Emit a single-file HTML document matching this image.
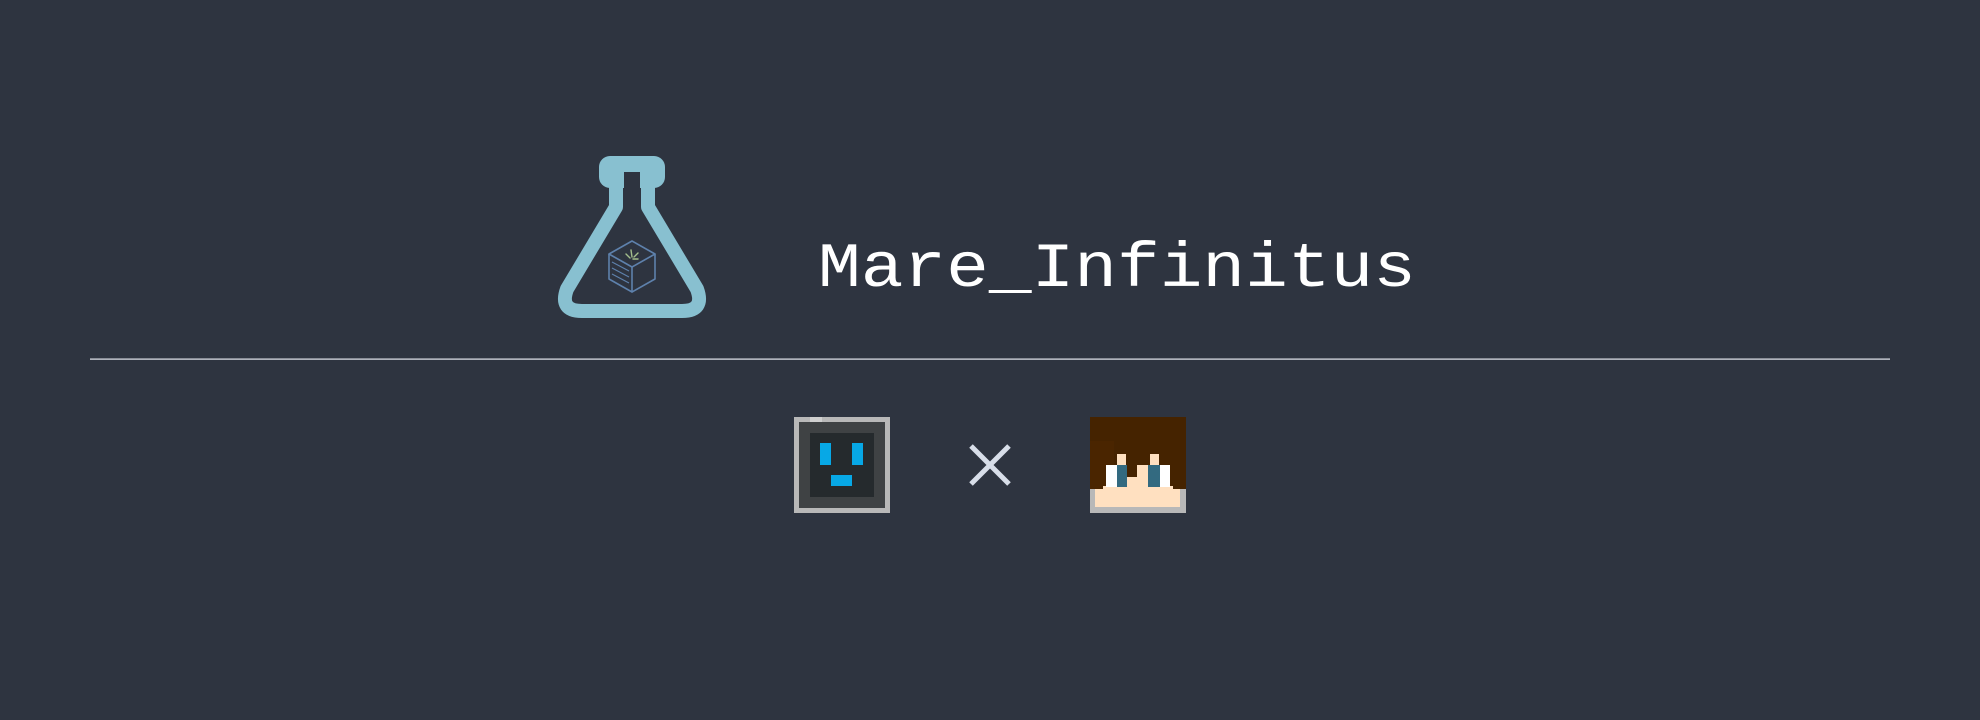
<!DOCTYPE html>
<html><head><meta charset="utf-8"><style>
html,body{margin:0;padding:0;background:#2e3440;width:1980px;height:720px;overflow:hidden}
svg{display:block}
</style></head><body>
<svg width="1980" height="720" viewBox="0 0 1980 720" xmlns="http://www.w3.org/2000/svg" shape-rendering="geometricPrecision">
<rect width="1980" height="720" fill="#2e3440"/>
<!-- flask -->
<rect x="599" y="156" width="66" height="32" rx="11" fill="#88c0d0"/>
<path d="M616 176 V207 L567 289 Q559 311 582 311 H682 Q705 311 697 289 L648 207 V176" fill="none" stroke="#88c0d0" stroke-width="14" stroke-linejoin="round"/>
<rect x="624" y="172" width="16" height="30" fill="#2e3440"/>
<!-- cube -->
<g fill="none" stroke="#5e81ac" stroke-width="1.6" stroke-linejoin="round">
<path d="M632 241 L655 254 L632 267 L609 254 Z"/>
<path d="M609 254 V279 L632 292 V267"/>
<path d="M655 254 V279 L632 292"/>
<path d="M612 262 L629 271 M612 268 L629 277 M612 274 L629 283" stroke-width="1.2"/>
</g>
<g fill="none" stroke="#a3be8c" stroke-width="1.4" stroke-linecap="round">
<path d="M630 258 L626 254 M632 257 L631 250 M634 257 L638 253 M633 259 L638 259"/>
</g>
<!-- title -->
<text x="818" y="286" font-family="Liberation Mono, DejaVu Sans Mono, monospace" font-size="63" fill="#ffffff" textLength="598" lengthAdjust="spacingAndGlyphs">Mare_Infinitus</text>
<!-- divider -->
<rect x="90" y="358.5" width="1800" height="1.2" fill="#e5e9f0"/>
<!-- left avatar -->
<rect x="794" y="417" width="96" height="96" fill="#b8b8b8"/>
<rect x="810" y="417" width="12" height="5" fill="#d0d0d0"/>
<rect x="799" y="422" width="86" height="86" fill="#3f4244"/>
<rect x="810" y="433" width="64" height="64" fill="#252a2d"/>
<rect x="820" y="443" width="11" height="22" fill="#07a8e6"/>
<rect x="852" y="443" width="11" height="22" fill="#07a8e6"/>
<rect x="831" y="475" width="21" height="11" fill="#07a8e6"/>
<!-- X -->
<path d="M971 446 L1009 484 M1009 446 L971 484" stroke="#d8dee9" stroke-width="5"/>
<!-- right avatar -->
<rect x="1090" y="417" width="96" height="96" fill="#452300"/>
<rect x="1090" y="441" width="24" height="48" fill="#4a2500"/>
<rect x="1090" y="489" width="96" height="24" fill="#b8b8b8"/>
<rect x="1095" y="489" width="85" height="18" fill="#ffe0c0"/>
<rect x="1103" y="486" width="70" height="4" fill="#ffe0c0"/>
<rect x="1106" y="465" width="11" height="22" fill="#ffffff"/>
<rect x="1117" y="454" width="9" height="11" fill="#ffe0c0"/>
<rect x="1117" y="465" width="10" height="22" fill="#336a80"/>
<rect x="1127" y="477" width="10" height="10" fill="#ffe0c0"/>
<rect x="1137" y="465" width="11" height="22" fill="#ffe0c0"/>
<rect x="1150" y="454" width="9" height="11" fill="#ffe0c0"/>
<rect x="1148" y="465" width="12" height="22" fill="#336a80"/>
<rect x="1160" y="465" width="10" height="22" fill="#ffffff"/>
</svg>
</body></html>
